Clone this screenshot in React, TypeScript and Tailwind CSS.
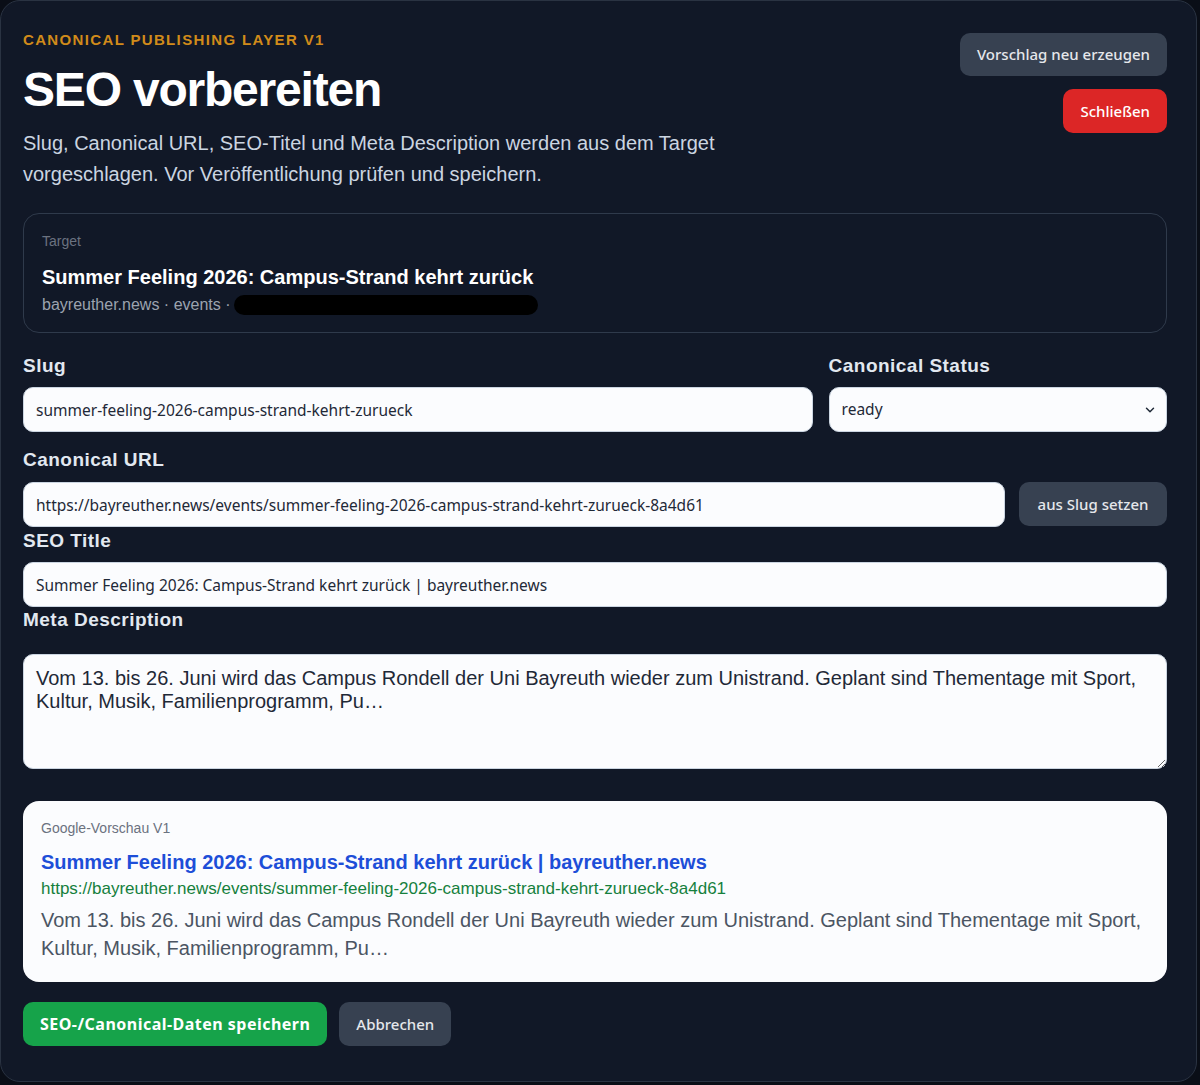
import { ChevronDown } from "lucide-react";

const arial = { fontFamily: '"Liberation Sans", Arial, sans-serif' };
const ui = { fontFamily: '"Noto Sans", "Open Sans", sans-serif' };

const description =
  "Vom 13. bis 26. Juni wird das Campus Rondell der Uni Bayreuth wieder zum Unistrand. Geplant sind Thementage mit Sport, Kultur, Musik, Familienprogramm, Pu…";

function Label({ children, className = "" }: { children: React.ReactNode; className?: string }) {
  return (
    <div className={`text-[19px] font-bold leading-[24px] tracking-[0.025em] text-[#e2e8f0] ${className}`}>
      {children}
    </div>
  );
}

function TextInput({ value }: { value: string }) {
  return (
    <input
      readOnly
      value={value}
      style={ui}
      className="h-[45px] w-full rounded-[10px] border border-[#cbd5e1] bg-[#fbfcfe] px-[12px] text-[15.5px] text-[#1f2937] outline-none"
    />
  );
}

export default function App() {
  return (
    <div className="h-[1085px] w-[1200px] bg-[#0a0e17]" style={arial}>
      <div className="h-[1082px] w-[1197px] rounded-[20px] border border-[#2a3342] bg-[#111827] pl-[22px] pr-[29px] pt-[29px]">
        {/* Header */}
        <div className="flex justify-between">
          <div>
            <div className="text-[15px] font-bold uppercase leading-[20px] tracking-[0.09em] text-[#d18b1a]">
              Canonical Publishing Layer v1
            </div>
            <h1 className="mt-[16px] text-[48px] font-bold leading-[48px] tracking-tight text-white">
              SEO vorbereiten
            </h1>
            <p className="mt-[14px] max-w-[740px] text-[20px] leading-[31px] text-[#cbd5e1]">
              Slug, Canonical URL, SEO-Titel und Meta Description werden aus dem Target vorgeschlagen. Vor
              Veröffentlichung prüfen und speichern.
            </p>
          </div>
          <div className="flex flex-col items-end gap-[13px] pt-[3px]" style={ui}>
            <button className="h-[43px] rounded-[10px] bg-[#374151] px-[17px] text-[15px] font-medium text-[#e5e7eb]">
              Vorschlag neu erzeugen
            </button>
            <button className="h-[44px] rounded-[10px] bg-[#dc2626] px-[17px] text-[15px] font-medium text-white">
              Schließen
            </button>
          </div>
        </div>

        {/* Target */}
        <div className="mt-[23px] rounded-[16px] border border-[#2f3a4b] px-[18px] pb-[17px] pt-[17px]">
          <div className="text-[14px] leading-[20px] text-[#6b7280]">Target</div>
          <div className="mt-[13px] text-[20px] font-bold leading-[26px] text-white">
            Summer Feeling 2026: Campus-Strand kehrt zurück
          </div>
          <div className="mt-[5px] flex items-center text-[16px] leading-[20px] text-[#9ca3af]">
            <span>bayreuther.news · events ·</span>
            <span className="ml-[3px] inline-block h-[20px] w-[304px] rounded-full bg-black" />
          </div>
        </div>

        {/* Slug + status */}
        <div className="mt-[21px] grid grid-cols-[7fr_3fr] gap-[16px]">
          <div>
            <Label>Slug</Label>
            <div className="mt-[9px]">
              <TextInput value="summer-feeling-2026-campus-strand-kehrt-zurueck" />
            </div>
          </div>
          <div>
            <Label>Canonical Status</Label>
            <div className="relative mt-[9px]">
              <select
                style={ui}
                defaultValue="ready"
                className="h-[45px] w-full appearance-none rounded-[10px] border border-[#cbd5e1] bg-[#fbfcfe] px-[12px] text-[15.5px] text-[#1f2937] outline-none"
              >
                <option value="ready">ready</option>
                <option value="draft">draft</option>
              </select>
              <ChevronDown
                className="pointer-events-none absolute right-[10px] top-1/2 -translate-y-1/2 text-[#1f2937]"
                size={14}
                strokeWidth={2.5}
              />
            </div>
          </div>
        </div>

        {/* Canonical URL */}
        <Label className="mt-[16px]">Canonical URL</Label>
        <div className="mt-[10px] flex gap-[14px]">
          <div className="flex-1">
            <TextInput value="https://bayreuther.news/events/summer-feeling-2026-campus-strand-kehrt-zurueck-8a4d61" />
          </div>
          <button
            style={ui}
            className="h-[44px] w-[148px] rounded-[10px] bg-[#374151] text-[15px] font-medium text-[#e5e7eb]"
          >
            aus Slug setzen
          </button>
        </div>

        {/* SEO title */}
        <Label className="mt-[2px]">SEO Title</Label>
        <div className="mt-[9px]">
          <TextInput value="Summer Feeling 2026: Campus-Strand kehrt zurück | bayreuther.news" />
        </div>

        {/* Meta description */}
        <Label className="mt-px">Meta Description</Label>
        <textarea
          readOnly
          value={description}
          className="mt-[22px] block h-[115px] w-full rounded-[10px] border border-[#cbd5e1] bg-[#fbfcfe] px-[12px] py-[12px] text-[20px] leading-[23px] text-[#1f2937] outline-none"
          style={arial}
        />

        {/* Google preview */}
        <div className="mt-[32px] rounded-[16px] bg-[#fbfcfe] px-[18px] pb-[20px] pt-[17px]">
          <div className="text-[14px] leading-[20px] text-[#6b7280]">Google-Vorschau V1</div>
          <div className="mt-[11px] text-[20px] font-bold leading-[26px] text-[#1d4ed8]">
            Summer Feeling 2026: Campus-Strand kehrt zurück | bayreuther.news
          </div>
          <div className="mt-[4px] text-[17px] leading-[20px] text-[#15803d]">
            https://bayreuther.news/events/summer-feeling-2026-campus-strand-kehrt-zurueck-8a4d61
          </div>
          <p className="mt-[7px] text-[20px] leading-[28px] text-[#4b5563]">{description}</p>
        </div>

        {/* Actions */}
        <div className="mt-[20px] flex gap-[12px]" style={ui}>
          <button className="h-[44px] rounded-[10px] bg-[#16a34a] px-[17px] text-[16px] font-bold tracking-[0.03em] text-white">
            SEO-/Canonical-Daten speichern
          </button>
          <button className="h-[44px] rounded-[10px] bg-[#374151] px-[17px] text-[15px] font-medium text-[#e5e7eb]">
            Abbrechen
          </button>
        </div>
      </div>
    </div>
  );
}
